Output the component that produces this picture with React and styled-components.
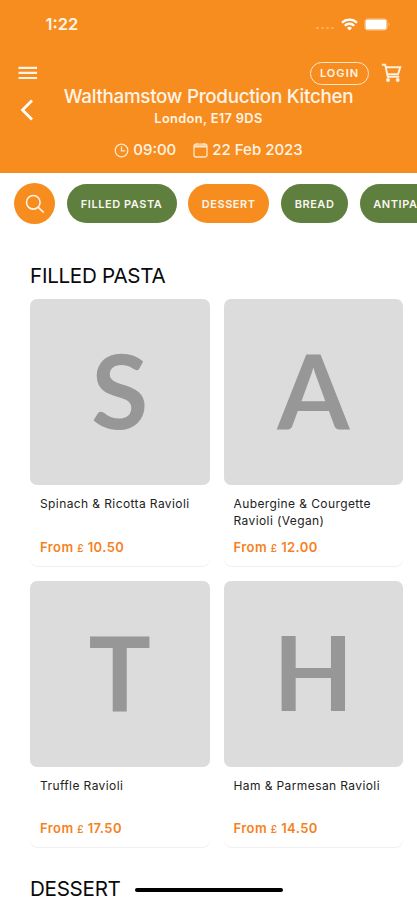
import * as React from "react";
import styled, { createGlobalStyle } from "styled-components";

const orange = "#f78c1f";
const green = "#5f7f3e";

const categories = [
  { id: 1, name: "FILLED PASTA", width: 110 },
  { id: 2, name: "DESSERT", width: 81, active: true },
  { id: 3, name: "BREAD", width: 67.5 },
  { id: 4, name: "ANTIPASTI", width: 90 },
];

const pasta = [
  { id: 1, name: "Spinach & Ricotta Ravioli", price: "10.50" },
  { id: 2, name: "Aubergine & Courgette Ravioli (Vegan)", price: "12.00" },
  { id: 3, name: "Truffle Ravioli", price: "17.50" },
  { id: 4, name: "Ham & Parmesan Ravioli", price: "14.50" },
];

const GlobalStyle = createGlobalStyle`
  * {
    box-sizing: border-box;
  }
  body {
    margin: 0;
    background: #fff;
    font-family: Inter, "Liberation Sans", sans-serif;
  }
  button {
    border: 0;
    padding: 0;
    background: none;
    color: inherit;
    font: inherit;
  }
`;

const Screen = styled.div`
  height: 900px;
  overflow: hidden;
  background: #fff;
`;

const Header = styled.header`
  height: 173px;
  background: ${orange};
  color: #fff4e6;
`;

const StatusBar = styled.div`
  height: 48px;
  padding: 0 27px 0 45.5px;
  display: flex;
  align-items: center;
  justify-content: space-between;
`;

const Clock = styled.span`
  font-size: 16.5px;
  font-weight: 600;
`;

const StatusIcons = styled.div`
  display: flex;
  align-items: center;
  gap: 6px;
`;

const Toolbar = styled.div`
  height: 38px;
  padding: 12px 15px 0 18px;
  display: flex;
  align-items: center;
`;

const IconButton = styled.button`
  display: flex;
`;

const LoginButton = styled.button`
  && {
    width: 59px;
    height: 23px;
    margin: 0 12px 0 auto;
    border: 1.5px solid #ffe6cb;
    border-radius: 12px;
    font-size: 11px;
    font-weight: 600;
    letter-spacing: 1.05px;
  }
`;

const Venue = styled.div`
  display: grid;
  grid-template-columns: 45px 1fr 45px;
`;

const BackButton = styled(IconButton)`
  && {
    padding: 13px 0 0 20px;
    align-self: start;
  }
`;

const VenueInfo = styled.div`
  display: flex;
  flex-direction: column;
  align-items: center;
  white-space: nowrap;
`;

const VenueName = styled.h1`
  margin: 0;
  font-size: 18.8px;
  font-weight: 500;
  line-height: 21px;
  letter-spacing: -0.28px;
`;

const Address = styled.div`
  margin-top: 3px;
  font-size: 12.8px;
  font-weight: 600;
  line-height: 18px;
  letter-spacing: 0.35px;
`;

const Slot = styled.div`
  margin-top: 12px;
  display: flex;
  gap: 17px;
  font-size: 15px;
  font-weight: 500;
  line-height: 20px;
`;

const SlotItem = styled.span`
  display: flex;
  align-items: center;
  gap: 4px;
`;

const Tabs = styled.nav`
  padding: 10px 0 0 14px;
  display: flex;
  align-items: center;
  gap: 11.6px;
  overflow: hidden;
`;

const SearchButton = styled.button`
  && {
    flex: none;
    width: 41px;
    height: 41px;
    display: flex;
    align-items: center;
    justify-content: center;
    border-radius: 50%;
    background: ${orange};
  }
`;

const Tab = styled.button`
  && {
    flex: none;
    width: ${(props) => props.$width}px;
    height: 39px;
    border-radius: 20px;
    background: ${(props) => (props.$active ? orange : green)};
    color: #f8f6ee;
    font-size: 11px;
    font-weight: 600;
    letter-spacing: 0.55px;
    white-space: nowrap;
  }
`;

const Section = styled.section`
  padding: ${(props) => props.$top}px 14px 0 30px;
`;

const SectionTitle = styled.h2`
  margin: 0;
  color: #0a0a0a;
  font-size: 20.6px;
  font-weight: 400;
  line-height: 26px;
  letter-spacing: -0.28px;
`;

const CardGrid = styled.div`
  margin-top: 10px;
  display: grid;
  grid-template-columns: 1fr 1fr;
  gap: 15px 14px;
`;

const Card = styled.article`
  height: 266.5px;
  display: flex;
  flex-direction: column;
  border-radius: 8px;
  box-shadow: 0 1px 1px rgba(0, 0, 0, 0.07);
`;

const Thumb = styled.div`
  height: 186px;
  padding-bottom: 6px;
  display: flex;
  align-items: center;
  justify-content: center;
  border-radius: 7px;
  background: #dcdcdc;
  color: #979797;
  font-family: Lato, sans-serif;
  font-size: 104px;
  font-weight: 700;
  line-height: 1;
`;

const CardBody = styled.div`
  flex: 1;
  padding: 10px 10px 9px;
  display: flex;
  flex-direction: column;
  justify-content: space-between;
`;

const DishName = styled.h3`
  margin: 0;
  color: #222;
  font-size: 12px;
  font-weight: 400;
  line-height: 17px;
  letter-spacing: 0.4px;
`;

const Price = styled.div`
  color: #f5821f;
  font-size: 13px;
  font-weight: 600;
  line-height: 17px;
  letter-spacing: 0.42px;
`;

const Currency = styled.span`
  font-size: 10px;
`;

const HomeIndicator = styled.div`
  position: fixed;
  left: 135px;
  bottom: 8px;
  width: 148px;
  height: 4px;
  border-radius: 2px;
  background: #000;
`;

const SignalIcon = () => (
  <svg width="20" height="14" viewBox="0 0 20 14" fill="#fff" opacity="0.3">
    <rect x="1" y="10" width="3" height="2" rx="1" />
    <rect x="6" y="10" width="3" height="2" rx="1" />
    <rect x="11" y="10" width="3" height="2" rx="1" />
    <rect x="16" y="10" width="3" height="2" rx="1" />
  </svg>
);

const WifiIcon = () => (
  <svg width="17" height="13" viewBox="0 0 17 13" fill="none" stroke="#fff" strokeWidth="2.3">
    <path d="M1 4.8a10.6 10.6 0 0 1 15 0" />
    <path d="M3.8 7.7a6.7 6.7 0 0 1 9.4 0" />
    <path d="M8.5 12.5 6 10a3.6 3.6 0 0 1 5 0z" fill="#fff" stroke="none" />
  </svg>
);

const BatteryIcon = () => (
  <svg width="26" height="13" viewBox="0 0 26 13">
    <rect x="0.5" y="0.5" width="23" height="12" rx="3.5" fill="none" stroke="#fff" opacity="0.25" />
    <rect x="1.5" y="1.5" width="21" height="10" rx="1.5" fill="#fff" />
    <path d="M24.6 4.5q1.2.6 1.2 2t-1.2 2z" fill="#fff" opacity="0.4" />
  </svg>
);

const MenuIcon = () => (
  <svg width="20" height="14" viewBox="0 0 20 14" stroke="#fff4e6" strokeWidth="2.2">
    <path d="M.5 1.8H19M.5 6.9H19M.5 12H19" />
  </svg>
);

const CartIcon = () => (
  <svg width="21" height="20" viewBox="0 0 21 20" fill="none" stroke="#fff0df" strokeWidth="1.9">
    <path d="M.8 1.8h3.400L6.800 13.800h11.400" />
    <path d="M4.700 4.300h14.600l-2.300 7H6.200" />
    <circle cx="7" cy="17" r="1" fill="#fff0df" />
    <circle cx="16.700" cy="17" r="1" fill="#fff0df" />
  </svg>
);

const BackIcon = () => (
  <svg width="14" height="22" viewBox="0 0 14 22" fill="none" stroke="#fff" strokeWidth="2.8">
    <path d="M12 1.5 2.5 11l9.5 9.5" />
  </svg>
);

const ClockIcon = () => (
  <svg width="15" height="15" viewBox="0 0 15 15" fill="none" stroke="#ffe6cb" strokeWidth="1.3">
    <circle cx="7.5" cy="7.5" r="6.3" />
    <path d="M7.5 3.2v4.6h3.8" />
  </svg>
);

const CalendarIcon = () => (
  <svg width="15" height="15" viewBox="0 0 15 15" fill="none" stroke="#ffe6cb" strokeWidth="1.3">
    <rect x="1" y="1.2" width="13" height="12.8" rx="1.8" />
    <path d="M1 3.4h13" strokeWidth="2.2" />
    <path d="M4 0v2M11 0v2" />
  </svg>
);

const SearchIcon = () => (
  <svg width="20" height="20" viewBox="0 0 20 20" fill="none" stroke="#fff4e6" strokeWidth="1.6">
    <circle cx="8.3" cy="8.3" r="6.8" />
    <path d="m13.1 13.1 5.700 5.500" />
  </svg>
);

const DishCard = ({ dish }) => (
  <Card>
    <Thumb>{dish.name[0]}</Thumb>
    <CardBody>
      <DishName>{dish.name}</DishName>
      <Price>
        From <Currency>£</Currency> {dish.price}
      </Price>
    </CardBody>
  </Card>
);

const App = () => {
  return (
    <Screen>
      <GlobalStyle />
      <Header>
        <StatusBar>
          <Clock>1:22</Clock>
          <StatusIcons>
            <SignalIcon />
            <WifiIcon />
            <BatteryIcon />
          </StatusIcons>
        </StatusBar>
        <Toolbar>
          <IconButton aria-label="Menu">
            <MenuIcon />
          </IconButton>
          <LoginButton>LOGIN</LoginButton>
          <IconButton aria-label="Cart">
            <CartIcon />
          </IconButton>
        </Toolbar>
        <Venue>
          <BackButton aria-label="Back">
            <BackIcon />
          </BackButton>
          <VenueInfo>
            <VenueName>Walthamstow Production Kitchen</VenueName>
            <Address>London, E17 9DS</Address>
            <Slot>
              <SlotItem>
                <ClockIcon />
                09:00
              </SlotItem>
              <SlotItem>
                <CalendarIcon />
                22 Feb 2023
              </SlotItem>
            </Slot>
          </VenueInfo>
        </Venue>
      </Header>
      <Tabs>
        <SearchButton aria-label="Search">
          <SearchIcon />
        </SearchButton>
        {categories.map((item) => (
          <Tab key={item.id} $width={item.width} $active={item.active}>
            {item.name}
          </Tab>
        ))}
      </Tabs>
      <Section $top={39}>
        <SectionTitle>FILLED PASTA</SectionTitle>
        <CardGrid>
          {pasta.map((dish) => (
            <DishCard key={dish.id} dish={dish} />
          ))}
        </CardGrid>
      </Section>
      <Section $top={29}>
        <SectionTitle>DESSERT</SectionTitle>
      </Section>
      <HomeIndicator />
    </Screen>
  );
};

export default App;
